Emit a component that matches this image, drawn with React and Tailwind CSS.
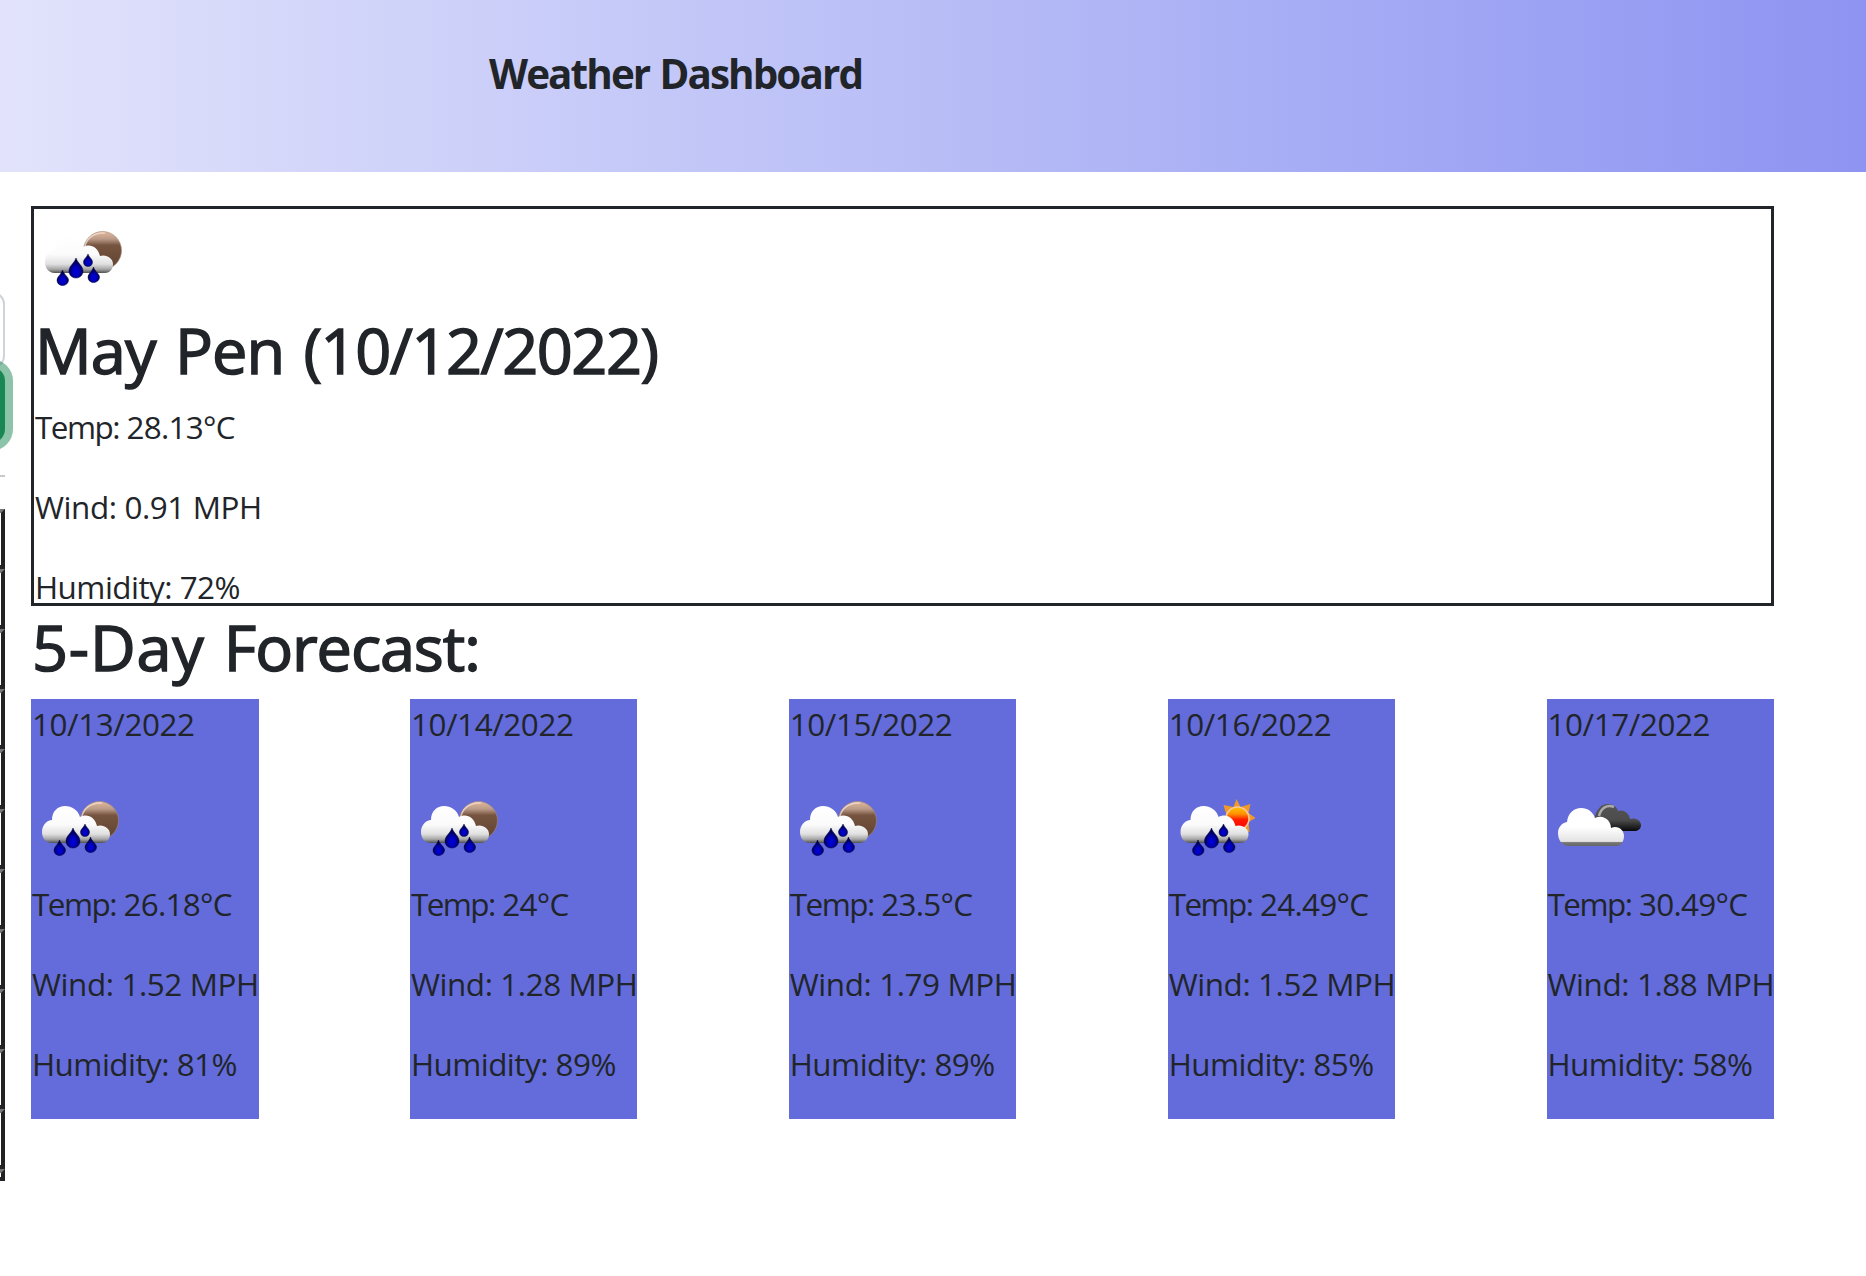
const BODY = "whitespace-nowrap pl-px pt-px h-[48px] leading-[48px] mb-8 text-[31.4px]";
const HEADING =
  "mb-4 pt-[2px] pl-px h-[77px] text-[63px] leading-[77px] whitespace-nowrap [-webkit-text-stroke:1.5px_#212529]";

function RainShapes() {
  return (
    <>
      <path d="M21 64 C13 64 11 57 11 53 C11 46 16 41 21 41 C21 32 27 27 34 27 C41 27 47 31 49 38 C56 34 64 38 66 47 C72 45 79 49 79 55 C79 61 75 64 71 64 Z" fill="url(#cloud)" />
      <g fill="url(#drop)" stroke="#00003f" strokeWidth=".5">
        <path d="M42 49 C43.5 54 49 57 49 62 C49 66 46 69 42 69 C38 69 35 66 35 62 C35 57 40.500 54 42 49 Z" />
        <path d="M54 45 C55 48.500 58.500 50 58.500 53 C58.500 56 56.500 57.500 54 57.500 C51.500 57.500 49.500 56 49.500 53 C49.500 50 53 48.500 54 45 Z" />
        <path d="M28.500 61 C29.500 65 34.500 68 34.500 71 C34.500 74 32 76.500 28.500 76.500 C25 76.500 23 74 23 71 C23 68 27.500 65 28.500 61 Z" />
        <path d="M59.500 58 C60.500 62 65.500 65 65.500 68 C65.500 71 63 73.500 59.500 73.500 C56 73.500 54 71 54 68 C54 65 58.500 62 59.500 58 Z" />
      </g>
    </>
  );
}

function Defs() {
  return (
    <svg className="absolute size-0" aria-hidden="true">
      <defs>
        <linearGradient id="cloud" x1="0" y1="0" x2="0" y2="1">
          <stop offset="0" stopColor="#fff" /><stop offset=".5" stopColor="#fbfbfb" /><stop offset=".76" stopColor="#e0e0e0" /><stop offset=".9" stopColor="#a5a5a5" /><stop offset="1" stopColor="#505050" />
        </linearGradient>
        <linearGradient id="cloudFlat" x1="0" y1="0" x2="0" y2="1">
          <stop offset="0" stopColor="#fff" /><stop offset=".5" stopColor="#fff" /><stop offset=".88" stopColor="#e3e3e3" /><stop offset=".91" stopColor="#777" /><stop offset="1" stopColor="#666" />
        </linearGradient>
        <radialGradient id="drop" cx=".5" cy=".68" r=".5">
          <stop offset="0" stopColor="#0000df" /><stop offset=".45" stopColor="#0000bd" /><stop offset="1" stopColor="#000052" />
        </radialGradient>
        <linearGradient id="moon" x1="0" y1="0" x2="0" y2="1">
          <stop offset="0" stopColor="#e2b99c" /><stop offset=".2" stopColor="#b99a87" /><stop offset=".36" stopColor="#76543f" /><stop offset="1" stopColor="#604331" />
        </linearGradient>
        <linearGradient id="sun" x1="0" y1="0" x2="0" y2="1">
          <stop offset="0" stopColor="#ffc400" /><stop offset=".3" stopColor="#ff9200" /><stop offset=".55" stopColor="#ff1b00" /><stop offset="1" stopColor="#f00" />
        </linearGradient>
        <linearGradient id="dark" x1="0" y1="0" x2="0" y2="1">
          <stop offset="0" stopColor="#555" /><stop offset=".6" stopColor="#4b4b4b" /><stop offset="1" stopColor="#080808" />
        </linearGradient>
      </defs>
    </svg>
  );
}

function WeatherIcon({ kind }) {
  return (
    <svg viewBox="0 0 100 100" className="block size-[100px]">
      {kind === "night" && (
        <>
          <circle cx="68.500" cy="41.500" r="19" fill="url(#moon)" stroke="#a98a78" strokeWidth=".6" />
          <path d="M50.500 41 C51 29 61 23 71 24" fill="none" stroke="#f2dfd2" strokeWidth="1.500" opacity=".8" />
          <RainShapes />
        </>
      )}
      {kind === "day" && (
        <g transform="translate(1.500 0)">
          <path d="M67 20 L71 28 L81 25 L79 34 L86 39 L79 43 L80 53 L68 51 L56 48 L57 36 L54 26 L64 28 Z" fill="#f39a25" />
          <circle cx="68" cy="39.500" r="11.500" fill="url(#sun)" stroke="#f7c9a0" strokeWidth="1.500" />
          <RainShapes />
        </g>
      )}
      {kind === "clouds" && (
        <>
          <path d="M47 40 C50 31 53 25 61 25 C66 25 70 28 71 32 C77 30 82 34 83 40 C89 38 94 42 94 46 C94 50 91 52 87 52 H59 Z" fill="url(#dark)" />
          <path d="M52 37 C54 29 60 25 67 28" fill="none" stroke="#aaa" strokeWidth="2.500" />
          <path d="M21 67 C14 66 11 60 11 54 C11 48 15 44 20 43 C21 34 27 29 34 29 C41 29 46 33 48 39 C56 35 64 41 64 49 C71 46 77 51 77 57 C77 62 74 67 70 67 Z" fill="url(#cloudFlat)" />
        </>
      )}
    </svg>
  );
}

const days = [
  { date: "10/13/2022", kind: "night", temp: "26.18", wind: "1.52", humidity: 81 },
  { date: "10/14/2022", kind: "night", temp: "24", wind: "1.28", humidity: 89 },
  { date: "10/15/2022", kind: "night", temp: "23.5", wind: "1.79", humidity: 89 },
  { date: "10/16/2022", kind: "day", temp: "24.49", wind: "1.52", humidity: 85 },
  { date: "10/17/2022", kind: "clouds", temp: "30.49", wind: "1.88", humidity: 58 },
];

function Readings({ temp, wind, humidity }) {
  return (
    <>
      <p className={`${BODY} tracking-[-0.7px]`}>
        <span className="tracking-[-1.5px]">Temp:</span> {temp}°C
      </p>
      <p className={`${BODY} tracking-[-0.4px]`}>Wind: {wind} MPH</p>
      <p className={`${BODY} tracking-[-0.52px]`}>Humidity: {humidity}%</p>
    </>
  );
}

function SearchEdge() {
  return (
    <aside className="w-[31px] shrink-0 pt-[120px]">
      <div className="-ml-[55px] h-[76px] w-[60px] rounded-[12px] border-2 border-[#ced4da] bg-white" />
      <div className="-mt-px -ml-[55px] h-[76px] w-[60px] rounded-[14px] bg-[#198754] shadow-[0_0_0_8px_rgba(25,135,84,0.5)]" />
      <div className="mt-[32px] h-[2px] w-[5px] bg-[#c8c9ca]" />
      <div className="mt-[32px] w-[5px]">
        {Array.from({ length: 12 }, (_, i) => (
          <div
            key={i}
            className="h-[60px] w-[5px] border-t-4 border-r-4 border-b-4 border-t-[#767676] border-r-[#212121] border-b-[#212529] last:h-[12px]"
          />
        ))}
      </div>
    </aside>
  );
}

export default function App() {
  return (
    <div className="h-[1276px] w-[1866px] overflow-hidden bg-white font-['Open_Sans','Noto_Sans',sans-serif] text-[#212529]">
      <Defs />
      <header className="h-[172px] bg-linear-to-r from-[#e2e3fb] via-[#b8bdf6] to-[#8e94f1] pt-[44px] pl-[489px]">
        <h1 className="text-[40.400px] leading-[60px] font-bold tracking-[-1.9px] [word-spacing:1.5px] whitespace-nowrap">Weather Dashboard</h1>
      </header>
      <div className="flex">
        <SearchEdge />
        <main className="w-[1743px] pt-[34px]">
          <section className="h-[400px] border-[3px] border-[#212529]">
            <WeatherIcon kind="night" />
            <h2 className={HEADING}>
              <span className="tracking-[-0.8px] [word-spacing:3.5px]">May Pen </span>
              <span className="tracking-[-1.45px]">(10/12/2022)</span>
            </h2>
            <Readings temp="28.13" wind="0.91" humidity={72} />
          </section>
          <h2 className={HEADING}>
            <span className="tracking-[0.8px] [word-spacing:2px]">5-Day </span>
            <span className="tracking-[-1.1px]">Forecast:</span>
          </h2>
          <section className="flex justify-between">
            {days.map((day) => (
              <article key={day.date} className="h-[420px] w-[227.500px] bg-[#636cda]">
                <p className={`${BODY} tracking-[-0.4px]`}>{day.date}</p>
                <WeatherIcon kind={day.kind} />
                <Readings temp={day.temp} wind={day.wind} humidity={day.humidity} />
              </article>
            ))}
          </section>
        </main>
      </div>
    </div>
  );
}
